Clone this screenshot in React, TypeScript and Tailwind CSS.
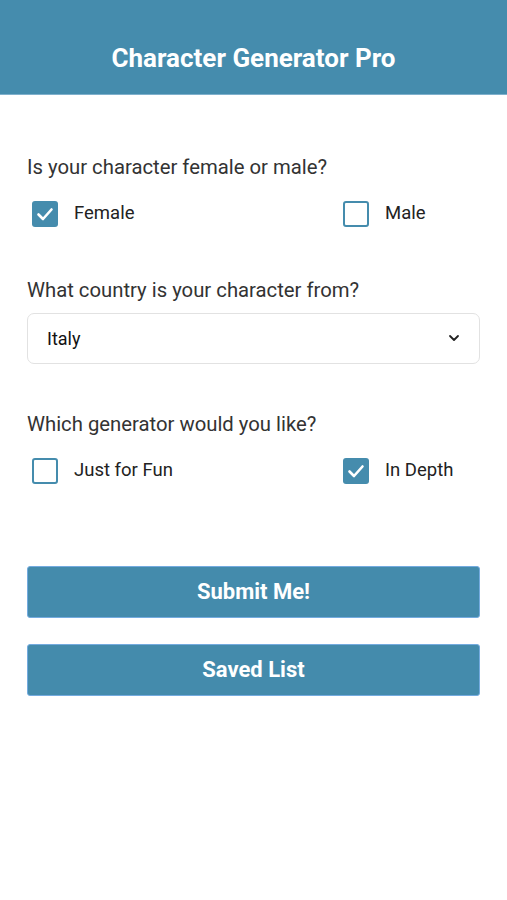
import React, { useState } from "react";

function Check({ checked, onClick }: { checked: boolean; onClick: () => void }) {
  return (
    <button
      type="button"
      onClick={onClick}
      className={
        "w-[26px] h-[26px] rounded-[3px] flex items-center justify-center shrink-0 " +
        (checked ? "bg-[#458cad]" : "bg-white border-[2.5px] border-[#458cad]")
      }
    >
      {checked && (
        <svg width="20" height="20" viewBox="0 0 20 20" fill="none">
          <path d="M3.5 10.5 L8 15 L16.5 5.5" stroke="white" strokeWidth="2.6" strokeLinecap="round" strokeLinejoin="round" />
        </svg>
      )}
    </button>
  );
}

function Option({ label, checked, onClick }: { label: string; checked: boolean; onClick: () => void }) {
  return (
    <div className="flex items-center gap-[16px]">
      <Check checked={checked} onClick={onClick} />
      <span className="text-[18.5px] text-[#222]">{label}</span>
    </div>
  );
}

export default function App() {
  const [female, setFemale] = useState(true);
  const [depth, setDepth] = useState(true);
  return (
    <div className="w-[507px] min-h-[900px] bg-white" style={{ fontFamily: "Roboto, 'Liberation Sans', sans-serif" }}>
      <header className="h-[95px] bg-[#458cad] border-b border-[#7fb0cc] flex items-end justify-center pb-[18px]">
        <h1 className="text-white text-[26px] font-bold leading-[36px]">Character Generator Pro</h1>
      </header>
      <main className="px-[27px] pt-[58px]">
        <p className="text-[20.3px] text-[#333] leading-[28px]">Is your character female or male?</p>
        <div className="grid grid-cols-[311px_1fr] pl-[5px] mt-[19px]">
          <Option label="Female" checked={female} onClick={() => setFemale(true)} />
          <Option label="Male" checked={!female} onClick={() => setFemale(false)} />
        </div>
        <p className="text-[20.3px] text-[#333] leading-[28px] mt-[48px]">What country is your character from?</p>
        <div className="mt-[9px] h-[51px] rounded-[7px] border border-[#e2e2e2] flex items-center justify-between pl-[19px] pr-[18px]">
          <span className="text-[18px] text-[#111]">Italy</span>
          <svg width="14" height="14" viewBox="0 0 14 14" fill="none">
            <path d="M3 5 L7 9 L11 5" stroke="#222" strokeWidth="1.8" strokeLinecap="round" strokeLinejoin="round" />
          </svg>
        </div>
        <p className="text-[20.3px] text-[#333] leading-[28px] mt-[46px]">Which generator would you like?</p>
        <div className="grid grid-cols-[311px_1fr] pl-[5px] mt-[19px]">
          <Option label="Just for Fun" checked={!depth} onClick={() => setDepth(false)} />
          <Option label="In Depth" checked={depth} onClick={() => setDepth(true)} />
        </div>
        <div className="mt-[81px] flex flex-col gap-[26px]">
          <button className="h-[52px] w-full rounded-[3px] bg-[#448bac] border border-[#74abdf] text-white text-[22px] font-bold">Submit Me!</button>
          <button className="h-[52px] w-full rounded-[3px] bg-[#448bac] border border-[#74abdf] text-white text-[22px] font-bold">Saved List</button>
        </div>
      </main>
    </div>
  );
}
